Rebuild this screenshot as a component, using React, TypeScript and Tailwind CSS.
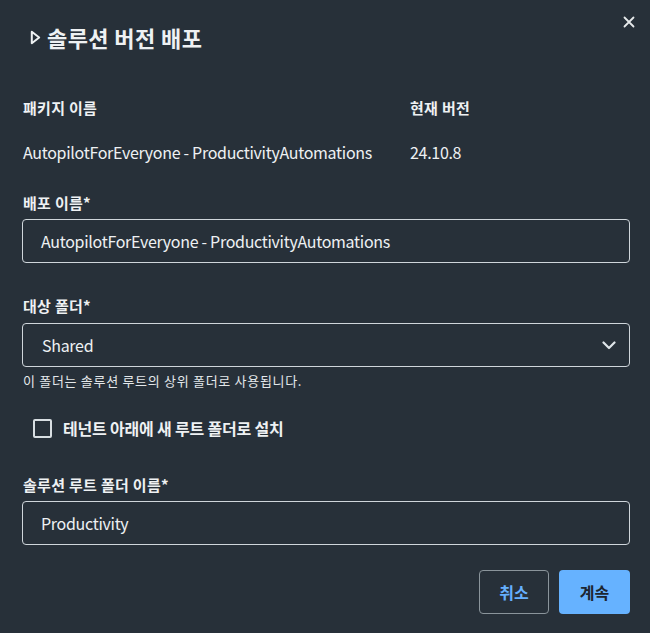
import React from "react";

export default function App() {
  const font = { fontFamily: '"Noto Sans CJK KR", "Noto Sans", sans-serif' };
  return (
    <div className="w-[650px] h-[633px] bg-[#273039] text-[#eef1f3] relative overflow-hidden" style={font}>
      <button className="absolute right-[11px] top-[12px] w-[20px] h-[20px] flex items-center justify-center text-[#e6e9eb]">
        <svg width="12" height="12" viewBox="0 0 12 12" fill="none" stroke="currentColor" strokeWidth="1.8" strokeLinecap="round">
          <path d="M1.5 1.5 L10.5 10.5 M10.5 1.5 L1.5 10.5" />
        </svg>
      </button>
      <div className="flex flex-col pl-[22px] pr-[20px]">
        <div className="flex items-center h-[24px] mt-[25px] pl-[8px] gap-[6px]">
          <svg width="11" height="15" viewBox="0 0 11 15" className="mt-[1px]">
            <path d="M1.8 1.8 L9.2 7.5 L1.8 13.2 Z" fill="none" stroke="#eef1f3" strokeWidth="2" strokeLinejoin="round" />
          </svg>
          <span className="text-[22px] font-bold leading-none tracking-[0.4px]">솔루션 버전 배포</span>
        </div>

        <div className="flex mt-[49px] pl-[1px]">
          <div className="w-[387px] flex flex-col">
            <span className="text-[15px] font-bold leading-[20px] tracking-[0.3px]">패키지 이름</span>
            <span className="text-[16px] leading-[22px] mt-[23px] tracking-[-0.3px]">AutopilotForEveryone - ProductivityAutomations</span>
          </div>
          <div className="flex flex-col">
            <span className="text-[15px] font-bold leading-[20px] tracking-[0.3px]">현재 버전</span>
            <span className="text-[16px] leading-[22px] mt-[23px] tracking-[-0.3px]">24.10.8</span>
          </div>
        </div>

        <span className="text-[15px] font-bold leading-[20px] mt-[30px] pl-[1px] tracking-[0.3px]">배포 이름*</span>
        <div className="mt-[6px] h-[44px] border border-[#cfd6db] rounded-[4px] flex items-center pl-[18px] text-[16px] tracking-[-0.3px]">
          AutopilotForEveryone - ProductivityAutomations
        </div>

        <span className="text-[15px] font-bold leading-[20px] mt-[33px] pl-[1px] tracking-[0.3px]">대상 폴더*</span>
        <div className="mt-[7px] h-[44px] border border-[#cfd6db] rounded-[4px] flex items-center justify-between pl-[19px] pr-[13px] text-[16px] tracking-[-0.3px]">
          <span>Shared</span>
          <svg width="14" height="9" viewBox="0 0 14 9" fill="none" stroke="#dfe5e9" strokeWidth="2.2" strokeLinecap="round" strokeLinejoin="round">
            <path d="M1.5 1.5 L7 7 L12.5 1.5" />
          </svg>
        </div>
        <span className="text-[13px] leading-[16px] mt-[6px] pl-[1px] text-[#e4e8eb] tracking-[0.7px]">이 폴더는 솔루션 루트의 상위 폴더로 사용됩니다.</span>

        <div className="flex items-center mt-[29px] pl-[11px] gap-[11px]">
          <div className="w-[19px] h-[19px] border-2 border-[#d8dee2] rounded-[2px]" />
          <span className="text-[16px] font-bold leading-[20px] tracking-[-0.2px]">테넌트 아래에 새 루트 폴더로 설치</span>
        </div>

        <span className="text-[15px] font-bold leading-[20px] mt-[37px] pl-[1px] tracking-[0.3px]">솔루션 루트 폴더 이름*</span>
        <div className="mt-[6px] h-[44px] border border-[#cfd6db] rounded-[4px] flex items-center pl-[18px] text-[16px] tracking-[-0.3px]">
          Productivity
        </div>

        <div className="flex justify-end gap-[10px] mt-[25px]">
          <button className="w-[70px] h-[44px] border border-[#8a949b] rounded-[4px] text-[#66b0ff] text-[16px] font-bold">
            취소
          </button>
          <button className="w-[71px] h-[44px] bg-[#66b2ff] rounded-[4px] text-[#1c2530] text-[16px] font-bold">
            계속
          </button>
        </div>
      </div>
    </div>
  );
}
